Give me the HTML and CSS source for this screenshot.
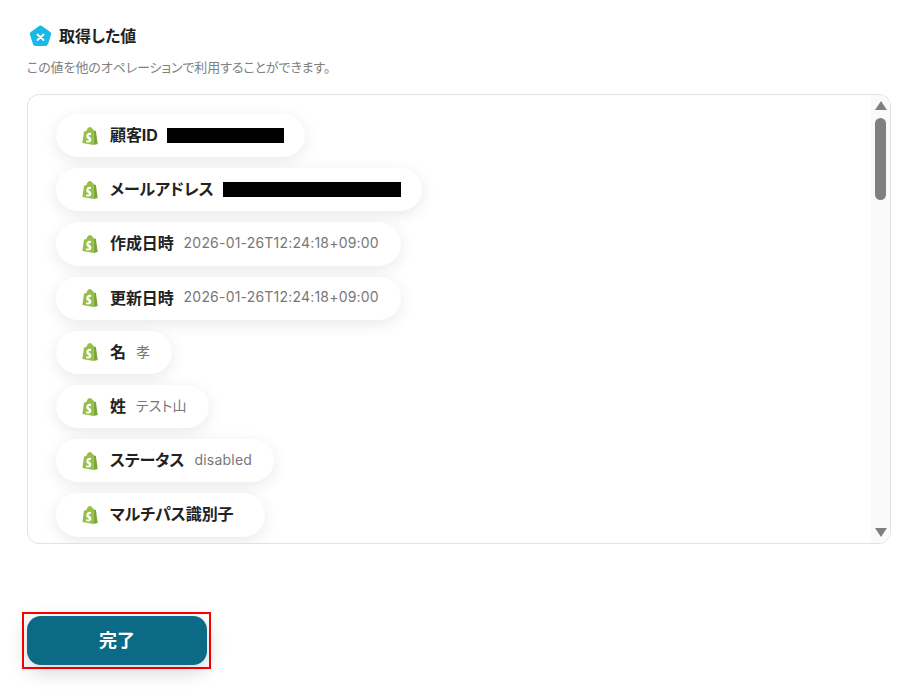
FILE: index.html
```html
<!DOCTYPE html>
<html lang="ja">
<head>
    <meta charset="UTF-8">
    <title>取得した値</title>
    <link rel="stylesheet" href="styles.css">
</head>
<body>

<svg width="0" height="0" class="defs">
    <symbol id="shopify" viewBox="0 0 16 18">
        <path fill="#95bf47" d="M11.400 2 10.600 2.200C10.200 1 9.600.5 8.900.5H8.700C8.400.1 8.100 0 7.800 0 5.800 0 4.800 2.500 4.500 3.800L2.600 4.400C2 4.600 2 4.600 1.900 5.200L.4 16 11.500 18Z"/>
        <path fill="#7aa63a" d="M11.400 2 11.500 18 15.700 17 13.900 4C13.900 3.900 13.800 3.800 13.700 3.800L12.300 3.700 11.400 2.800Z"/>
        <path fill="#fff" d="M9.200 6.300 8.500 8.400C8 8.100 6.900 7.900 6.600 8.400 6.200 9.500 9.400 10 9.400 12.500 9.400 14.500 8 15.500 6.500 15.500 5 15.500 4 14.700 4 14.700L4.500 13C4.500 13 5.400 13.800 6.100 13.800 6.600 13.800 6.900 13.500 6.900 13.100 6.900 11.800 4.300 11.800 4.300 9.500 4.300 7.500 5.700 5.800 7.700 5.800 8.500 5.800 9.200 6.300 9.200 6.300Z"/>
    </symbol>
</svg>

<header class="heading">
    <svg class="heading-icon" viewBox="0 0 24 24">
        <path fill="#17b9e6" d="M10.200 1.300a3 3 0 0 1 3.600 0l8 5.800a3 3 0 0 1 1.100 3.400l-3 9.400a3 3 0 0 1-2.900 2.100H7a3 3 0 0 1-2.900-2.100l-3-9.400a3 3 0 0 1 1.100-3.400Z"/>
        <path fill="none" stroke="#fff" stroke-width="2" stroke-linecap="round" d="M8.800 10l6.400 5.600M15.200 10l-6.400 5.600"/>
    </svg>
    <h1>取得した値</h1>
</header>
<p class="hint">この値を他のオペレーションで利用することができます。</p>

<div class="panel">
    <ul class="values">
        <li class="pill">
            <svg class="shop-icon"><use href="#shopify"/></svg>
            <span class="label">顧客ID</span>
            <span class="redacted redacted-id"></span>
        </li>
        <li class="pill">
            <svg class="shop-icon"><use href="#shopify"/></svg>
            <span class="label">メールアドレス</span>
            <span class="redacted redacted-mail"></span>
        </li>
        <li class="pill">
            <svg class="shop-icon"><use href="#shopify"/></svg>
            <span class="label">作成日時</span>
            <span class="value">2026-01-26T12:24:18+09:00</span>
        </li>
        <li class="pill">
            <svg class="shop-icon"><use href="#shopify"/></svg>
            <span class="label">更新日時</span>
            <span class="value">2026-01-26T12:24:18+09:00</span>
        </li>
        <li class="pill">
            <svg class="shop-icon"><use href="#shopify"/></svg>
            <span class="label">名</span>
            <span class="value">孝</span>
        </li>
        <li class="pill">
            <svg class="shop-icon"><use href="#shopify"/></svg>
            <span class="label">姓</span>
            <span class="value">テスト山</span>
        </li>
        <li class="pill">
            <svg class="shop-icon"><use href="#shopify"/></svg>
            <span class="label">ステータス</span>
            <span class="value">disabled</span>
        </li>
        <li class="pill">
            <svg class="shop-icon"><use href="#shopify"/></svg>
            <span class="label">マルチパス識別子</span>
            <span class="value"></span>
        </li>
    </ul>
    <div class="scrollbar">
        <span class="arrow arrow-up"></span>
        <span class="thumb"></span>
        <span class="arrow arrow-down"></span>
    </div>
</div>

<div class="highlight">
    <button class="btn-done">完了</button>
</div>

</body>
</html>
```

FILE: styles.css
```css
body {
    font-family: Inter, "Noto Sans CJK JP", sans-serif;
    font-feature-settings: "palt";
    background-color: #fff;
    color: #222;
    margin: 0;
    padding: 25px 23px 0 27px;
    height: 673px;
    overflow: hidden;
}
.defs {
    position: absolute;
}
.heading {
    display: flex;
    align-items: center;
    gap: 7px;
    padding-left: 2px;
    height: 23px;
}
.heading-icon {
    width: 23px;
    height: 23px;
}
.heading h1 {
    margin: 0 0 4px;
    font-size: 16px;
    font-weight: 700;
}
.hint {
    margin: 10px 0 18px;
    font-size: 13px;
    line-height: 18px;
    letter-spacing: -0.1px;
    color: #808080;
}
.panel {
    display: flex;
    height: 448px;
    border: 1px solid #e2e2e2;
    border-radius: 12px;
    overflow: hidden;
}
.values {
    flex: 1;
    list-style: none;
    margin: 0;
    padding: 19px 0 0 28px;
    overflow: hidden;
}
.pill {
    display: flex;
    align-items: center;
    width: fit-content;
    height: 43.2px;
    margin-bottom: 11px;
    padding: 0 22px 0 26px;
    box-sizing: border-box;
    background-color: #fff;
    border-radius: 22px;
    box-shadow: 0 4px 16px rgba(0, 0, 0, 0.09);
}
.shop-icon {
    width: 16px;
    height: 18px;
    margin-right: 12px;
}
.label {
    margin-bottom: 3px;
    font-size: 16px;
    font-weight: 700;
    letter-spacing: -0.1px;
}
.value {
    margin: 0 0 3px 10px;
    font-size: 14px;
    letter-spacing: 0.2px;
    color: #777;
}
.redacted {
    height: 15px;
    margin: 0 -1px 0 9px;
    background-color: #000;
}
.redacted-id {
    width: 117px;
}
.redacted-mail {
    width: 178px;
}
.scrollbar {
    display: flex;
    flex-direction: column;
    align-items: center;
    width: 19px;
    padding: 6px 0;
    box-sizing: border-box;
    background-color: #fafafa;
}
.arrow {
    width: 0;
    height: 0;
    border-left: 6.500px solid transparent;
    border-right: 6.500px solid transparent;
}
.arrow-up {
    border-bottom: 9px solid #808080;
}
.arrow-down {
    margin-top: auto;
    border-top: 9px solid #808080;
}
.thumb {
    width: 11px;
    height: 82px;
    margin-top: 8px;
    background-color: #808080;
    border-radius: 6px;
}
.highlight {
    width: fit-content;
    margin: 68px 0 0 -5px;
    padding: 2px 2px 2px 3px;
    border: 2px solid #f00;
}
.btn-done {
    display: block;
    width: 180px;
    height: 49px;
    padding-bottom: 4px;
    border: none;
    border-radius: 14px;
    background-color: #0b6a85;
    color: #fff;
    font-family: inherit;
    font-size: 18px;
    font-weight: 700;
    box-shadow: 0 6px 20px rgba(0, 0, 0, 0.18);
}
```
